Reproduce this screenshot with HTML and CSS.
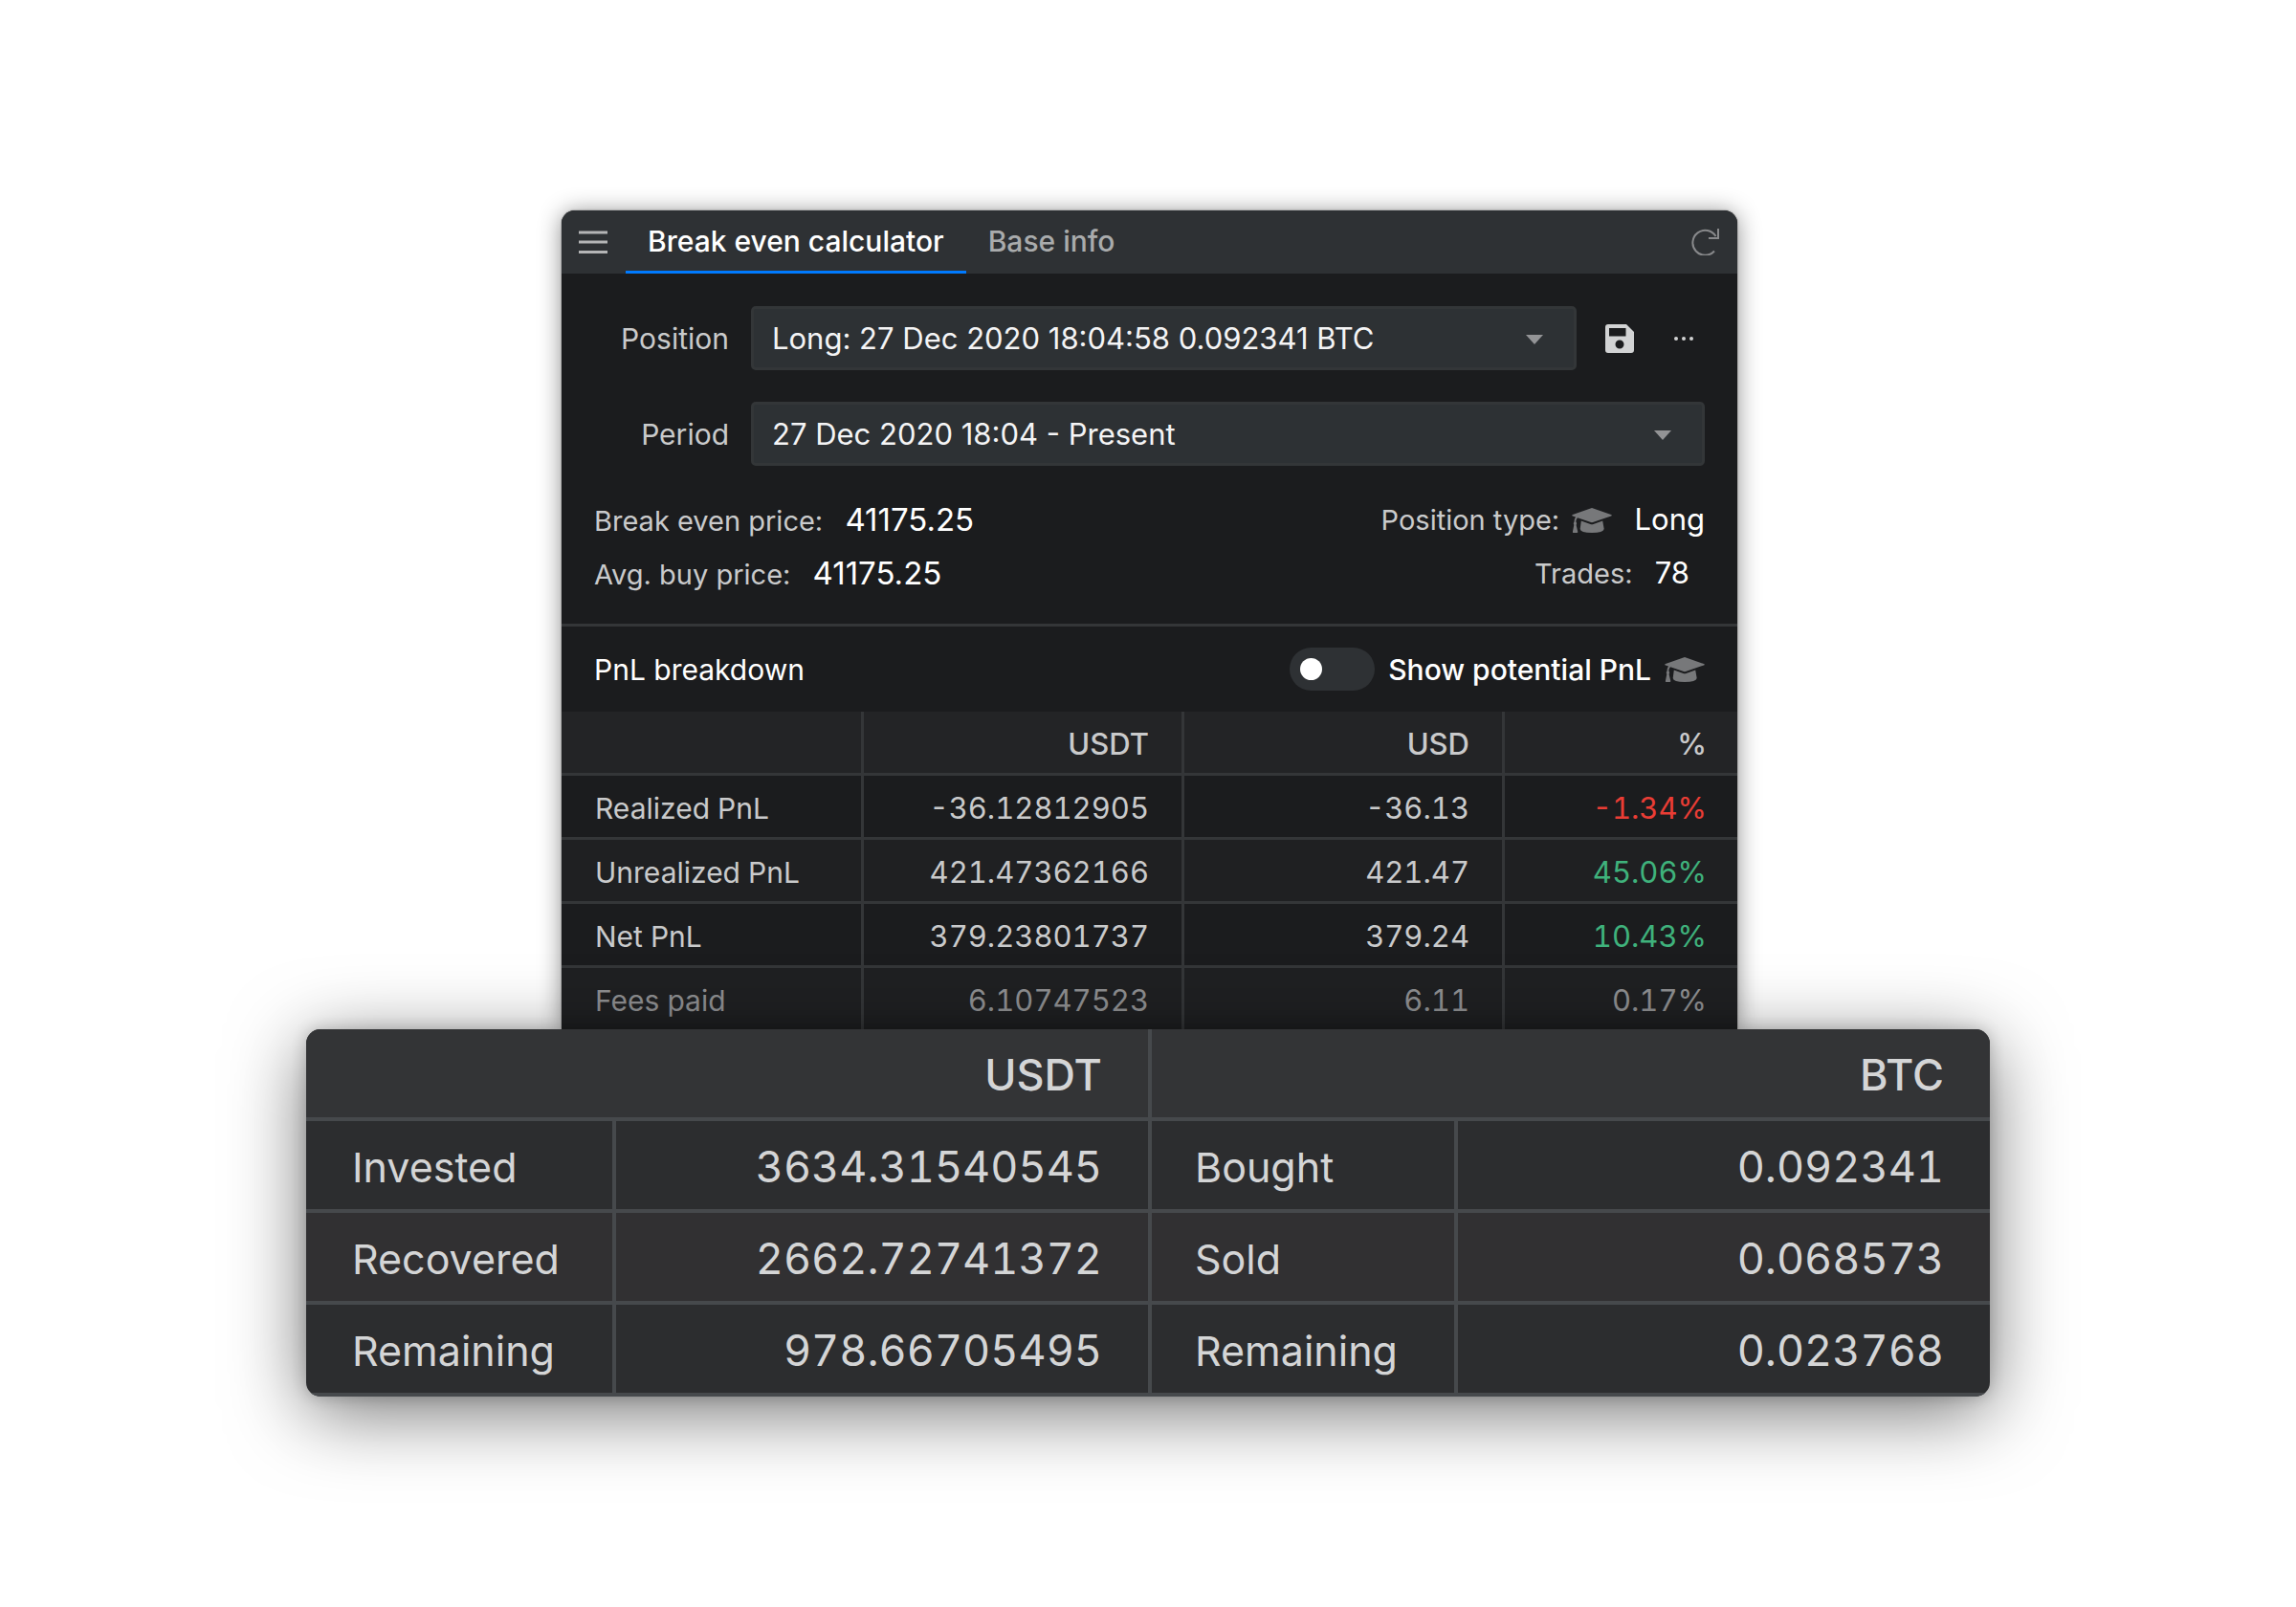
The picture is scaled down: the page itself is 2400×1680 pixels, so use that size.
FILE: index.html
```html
<!DOCTYPE html>
<html lang="en">
<head>
  <meta charset="UTF-8" />
  <meta name="viewport" content="width=device-width, initial-scale=1.0" />
  <title>Break even calculator</title>
  <link rel="stylesheet" href="styles.css">
</head>
<body>
  <svg class="sprite" aria-hidden="true">
    <symbol id="icon-cap" viewBox="0 0 42 26">
      <path d="M21 0 L41 7 Q42.500 7.700 41 8.500 L22 15 Q21 15.300 20 15 L6 10.300 Q4.500 12 4.300 14.300 Q5.800 16 4.600 17.800 L6.300 25 Q6.300 26 5.300 26 L1.500 26 Q0.700 26 0.900 25 L2.300 17.800 Q1.200 16 2.500 14.400 Q2.700 11.500 4 9.600 L1 8.500 Q-0.500 7.700 1 7 Z" />
      <path d="M9.800 13.500 L19.500 17 Q21 17.500 22.500 17 L32.200 13.500 L33.700 22 Q33 26 21 26 Q9 26 8.700 22 Z" />
    </symbol>
  </svg>

  <main class="page">
    <section class="panel">
      <header class="panel-header">
        <button class="icon-button menu-button" type="button" aria-label="Menu">
          <svg width="30" height="26" viewBox="0 0 30 26"><path d="M0 3H30M0 13H30M0 23.500H30" /></svg>
        </button>
        <nav class="tabs">
          <a class="tab active" href="#calculator">Break even calculator</a>
          <a class="tab" href="#base">Base info</a>
        </nav>
        <button class="icon-button refresh-button" type="button" aria-label="Refresh">
          <svg width="30" height="28" viewBox="0 0 30 28"><path d="M24 23.500 A13 13 0 1 1 25.500 8 M28 0V10H18" /></svg>
        </button>
      </header>

      <form class="filters">
        <div class="field">
          <label for="position">Position</label>
          <div class="select">
            <select id="position">
              <option>Long: 27 Dec 2020 18:04:58 0.092341 BTC</option>
            </select>
          </div>
          <button class="icon-button save-button" type="button" aria-label="Save">
            <svg width="30" height="30" viewBox="0 0 30 30"><path fill-rule="evenodd" d="M3 0H22L30 8V27Q30 30 27 30H3Q0 30 0 27V3Q0 0 3 0ZM4 4V12.500H21.500V4ZM15 16.500A4.500 4.500 0 1 0 15 25.500A4.500 4.500 0 1 0 15 16.500Z" /></svg>
          </button>
          <button class="icon-button more-button" type="button" aria-label="More">
            <svg width="20" height="4" viewBox="0 0 20 4"><circle cx="2" cy="2" r="2" /><circle cx="10" cy="2" r="2" /><circle cx="18" cy="2" r="2" /></svg>
          </button>
        </div>
        <div class="field">
          <label for="period">Period</label>
          <div class="select">
            <select id="period">
              <option>27 Dec 2020 18:04 - Present</option>
            </select>
          </div>
        </div>
      </form>

      <div class="summary">
        <div class="summary-row">
          <p>Break even price: <strong>41175.25</strong></p>
          <p>Position type: <svg class="cap" width="42" height="26"><use href="#icon-cap" /></svg> <strong>Long</strong></p>
        </div>
        <div class="summary-row">
          <p>Avg. buy price: <strong>41175.25</strong></p>
          <p class="trades">Trades: <strong>78</strong></p>
        </div>
      </div>

      <div class="breakdown-bar">
        <h2>PnL breakdown</h2>
        <div class="potential">
          <input class="toggle" type="checkbox" id="potential" />
          <label for="potential">Show potential PnL</label>
          <svg class="cap" width="42" height="26"><use href="#icon-cap" /></svg>
        </div>
      </div>

      <div class="breakdown-wrap">
        <table class="breakdown">
          <colgroup>
            <col class="col-name" />
            <col class="col-value" />
            <col class="col-value" />
            <col />
          </colgroup>
          <thead>
            <tr><th></th><th>USDT</th><th>USD</th><th>%</th></tr>
          </thead>
          <tbody>
            <tr><td>Realized PnL</td><td>-36.12812905</td><td>-36.13</td><td class="loss">-1.34%</td></tr>
            <tr><td>Unrealized PnL</td><td>421.47362166</td><td>421.47</td><td class="gain">45.06%</td></tr>
            <tr><td>Net PnL</td><td>379.23801737</td><td>379.24</td><td class="gain">10.43%</td></tr>
            <tr class="faded"><td>Fees paid</td><td>6.10747523</td><td>6.11</td><td>0.17%</td></tr>
          </tbody>
        </table>
      </div>
    </section>

    <section class="totals-card">
      <table class="totals">
        <colgroup>
          <col class="col-invested" />
          <col class="col-amount" />
          <col class="col-bought" />
          <col />
        </colgroup>
        <thead>
          <tr><th colspan="2">USDT</th><th colspan="2">BTC</th></tr>
        </thead>
        <tbody>
          <tr><td>Invested</td><td>3634.31540545</td><td>Bought</td><td>0.092341</td></tr>
          <tr><td>Recovered</td><td>2662.72741372</td><td>Sold</td><td>0.068573</td></tr>
          <tr><td>Remaining</td><td>978.66705495</td><td>Remaining</td><td>0.023768</td></tr>
        </tbody>
      </table>
    </section>
  </main>
</body>
</html>
```
FILE: styles.css
```css
/* General Styles */
* {
  box-sizing: border-box;
}

body {
  margin: 0;
  background-color: #fff;
  color: #c9cacb;
  font-family: Inter, "Liberation Sans", sans-serif;
  font-size: 31px;
  line-height: 56px;
}

h2, p {
  margin: 0;
}

.sprite {
  position: absolute;
  width: 0;
  height: 0;
}

.page {
  padding: 220px 320px;
}

/* Panel */
.panel {
  margin: 0 264px 0 267px;
  background-color: #1b1c1e;
  border-radius: 14px 14px 0 0;
  box-shadow: 0 0 2px rgba(0, 0, 0, 0.5), 0 2px 24px rgba(0, 0, 0, 0.45);
}

.panel-header {
  display: flex;
  align-items: center;
  height: 66px;
  padding: 0 18px;
  background-color: #2e3134;
  border-radius: 14px 14px 0 0;
}

.icon-button {
  display: flex;
  align-items: center;
  justify-content: center;
  padding: 0;
  border: none;
  background: none;
  cursor: pointer;
}

.menu-button svg, .refresh-button svg {
  fill: none;
  stroke: #b4b5b6;
  stroke-width: 3;
}

.refresh-button svg {
  stroke: #88898b;
  stroke-width: 2;
}

.tabs {
  display: flex;
  flex: 1;
  align-self: stretch;
  margin-left: 19px;
}

.tab {
  padding: 4px 23px 0;
  color: #a9abac;
  font-size: 30px;
  font-weight: 500;
  text-decoration: none;
}

.tab.active {
  color: #fff;
  border-bottom: 3px solid #007aff;
}

/* Position and period */
.filters {
  display: flex;
  flex-direction: column;
  gap: 33px;
  padding: 34px 34px 0;
}

.field {
  display: flex;
  align-items: center;
}

.field label {
  width: 141px;
  margin-right: 23px;
  text-align: right;
  font-size: 30px;
}

.select {
  position: relative;
  flex: 1;
}

.select::after {
  content: "";
  position: absolute;
  top: 30px;
  right: 35px;
  border: 9px solid transparent;
  border-top: 10px solid #939496;
  border-bottom: none;
  pointer-events: none;
}

.select select {
  display: block;
  width: 100%;
  height: 67px;
  padding: 0 19px;
  appearance: none;
  background-color: #2d3134;
  border: 3px solid #333638;
  border-radius: 5px;
  color: #f4f4f5;
  font-family: inherit;
  font-size: 31px;
}

.save-button {
  margin-left: 30px;
  fill: #d2d3d4;
}

.more-button {
  margin: 0 12px 0 42px;
  fill: #d2d3d4;
}

/* Summary */
.summary {
  padding: 28px 34px 25px;
  border-bottom: 3px solid #343638;
  font-size: 29px;
}

.summary-row {
  display: flex;
  justify-content: space-between;
  height: 56px;
}

.summary strong {
  margin-left: 15px;
  color: #fff;
  font-size: 33px;
  font-weight: 400;
}

.summary-row p:last-child strong {
  font-size: 31px;
}

.summary .trades {
  padding-right: 16px;
}

.cap {
  fill: #77787a;
}

.summary .cap {
  margin-left: 5px;
  vertical-align: -3px;
}

/* PnL breakdown */
.breakdown-bar {
  display: flex;
  align-items: center;
  justify-content: space-between;
  height: 89px;
  padding: 0 34px;
  color: #fff;
}

.breakdown-bar h2 {
  font-size: 30px;
  font-weight: 400;
}

.potential {
  display: flex;
  align-items: center;
  gap: 14px;
  font-size: 30px;
  font-weight: 500;
}

.toggle {
  display: flex;
  align-items: center;
  width: 89px;
  height: 45px;
  margin: 0;
  padding: 0 11px;
  appearance: none;
  background-color: #2e3134;
  border-radius: 23px;
}

.toggle::before {
  content: "";
  width: 23px;
  height: 23px;
  border-radius: 50%;
  background-color: #fff;
}

.breakdown-wrap {
  height: 332px;
  overflow: hidden;
}

table {
  width: 100%;
  border-collapse: separate;
  border-spacing: 0;
  table-layout: fixed;
  font-variant-numeric: tabular-nums;
}

th, td {
  text-align: right;
  font-weight: 400;
}

th {
  font-weight: 500;
}

.breakdown th, .breakdown td {
  height: 67px;
  padding: 4px 34px 0 35px;
  border-right: 3px solid #343638;
  border-bottom: 3px solid #343638;
  line-height: 60px;
}

.breakdown tbody tr:nth-child(even) {
  background-color: #1f2022;
}

.breakdown th {
  background-color: #232426;
}

.breakdown td:first-child {
  text-align: left;
  font-size: 30px;
}

.breakdown th:last-child, .breakdown td:last-child {
  padding-right: 32px;
  border-right: none;
}

.breakdown .faded td {
  color: #8e8f91;
}

.breakdown .loss {
  color: #ea3d35;
}

.breakdown .gain {
  color: #3fb27c;
}

.col-name {
  width: 316px;
}

.col-value {
  width: 335px;
}

/* Totals */
.totals-card {
  position: relative;
  overflow: hidden;
  border-radius: 15px;
  background-color: #2c2d2f;
  box-shadow: 0 0 16px rgba(0, 0, 0, 0.2), 0 16px 80px rgba(0, 0, 0, 0.55);
  color: #d4d5d6;
  font-size: 45px;
}

.totals th, .totals td {
  height: 96px;
  padding: 4px 48px 0;
  border-right: 4px solid #46494c;
  border-bottom: 4px solid #46494c;
  line-height: 88px;
}

.totals th {
  background-color: #333436;
}

.totals tbody tr:nth-child(even) {
  background-color: #313032;
}

.totals th:last-child, .totals td:last-child {
  border-right: none;
}

.totals td:nth-child(odd) {
  text-align: left;
  font-size: 43px;
}

.totals td:nth-child(3) {
  padding-left: 45px;
}

.col-invested {
  width: 324px;
}

.col-amount {
  width: 560px;
}

.col-bought {
  width: 320px;
}

/* Small screens */
@media (max-width: 1800px) {
  .page {
    padding: 40px 20px;
  }

  .panel {
    margin: 0 20px;
  }
}
```
